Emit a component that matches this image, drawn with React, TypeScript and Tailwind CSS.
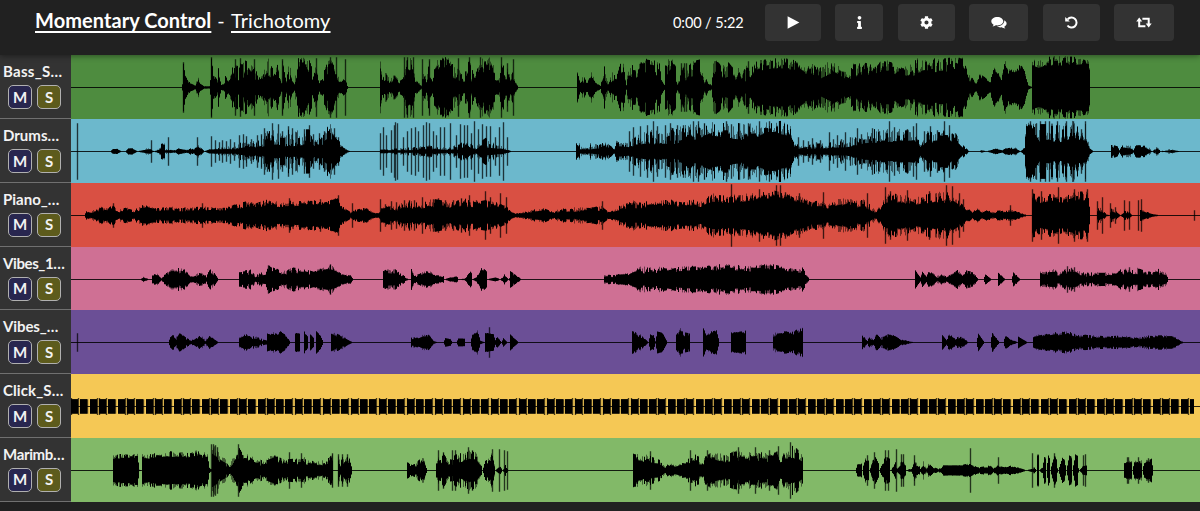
import React from "react";
import { FaInfo, FaCog } from "react-icons/fa";

const LEFT = 71;
const WIDTH = 1129;
const ROW = 63.75;
const MID = 32.2;

type Track = {
  name: string;
  bg: string;
  tracking: string;
  spread: number;
  // share of the body height that always stays filled
  core: number;
  // "x:body:peak" control points, half-heights in px
  env: string;
  // "x:height" translucent transients
  hits?: string;
};

const clickEnv = (() => {
  const out: string[] = [];
  for (let i = 0; i < 121; i++) {
    const x = LEFT + i * 9.325;
    if (x > 1192) break;
    const a = Math.round(x);
    const b = Math.min(1194, Math.round(x + 7));
    out.push(`${a}:7.1:7.1`, `${b}:7.1:7.1`, `${b}:0:0`, `${Math.round(x + 9.325)}:0:0`);
  }
  return out.join(" ");
})();

const clickHits = (() => {
  const out: string[] = [];
  for (let i = 0; i < 121; i++) {
    const x = Math.round(LEFT + i * 9.325 + 7);
    if (x > 1188) break;
    out.push(`${x}:${i % 3 === 1 ? 7 : 8.3}`);
    if (i % 3 === 0) out.push(`${x - 7}:8.3`);
  }
  return out.join(" ");
})();

const tracks: Track[] = [
  {
    name: "Bass_S…",
    bg: "bg-[#4e8c3f]",
    tracking: "tracking-[0.3px]",
    spread: 1.1,
    core: 0.84,
    env: "182:3:3 183:22:25 185:8:12 190:3:4 195:2:2 197:6:14 199:4:5 204:1:1 209:1:1 210:4:8 211:24:30 213:10:14 217:5:8 218:8:20 221:2:3 224:3:5 225:6:16 228:5:8 231:6:18 234:7:26 238:7:29 243:7:28 247:6:26 250:6:20 254:6:28 258:6:8 263:6:22 267:14:30 272:10:28 277:5:24 280:4:10 282:5:28 285:5:10 289:5:26 292:4:8 294:2:4 296:10:20 298:24:30 304:27:30 309:8:28 313:6:16 316:6:28 319:4:6 322:4:10 325:10:26 330:8:30 336:8:30 338:6:12 341:4:6 344:3:10 348:0:0 379:0:0 380:10:26 382:5:8 386:6:20 389:4:6 394:5:18 399:4:6 403:5:10 405:14:30 409:8:30 413:10:28 415:5:8 421:1:2 422:6:28 426:4:6 429:7:28 432:5:8 435:12:28 440:24:30 449:22:30 453:8:22 458:7:20 463:6:10 469:7:30 474:6:10 480:9:28 485:18:30 492:22:30 495:6:8 499:5:9 501:12:30 504:5:24 507:5:24 510:5:10 513:5:20 515:4:6 518:0:0 576:0:0 577:7:16 580:3:6 584:5:14 587:3:5 591:4:16 595:4:5 600:1:2 603:8:22 605:5:20 608:1:4 612:4:16 616:5:12 620:14:24 623:7:28 626:1:3 628:7:24 634:8:24 639:14:28 645:16:29 652:15:28 659:13:26 661:5:8 664:2:3 665:12:26 671:20:30 675:8:24 677:2:4 681:6:22 687:6:22 692:12:26 699:8:28 703:5:12 708:2:5 711:1:2 713:12:30 716:20:29 722:10:26 727:12:29 731:7:22 735:6:18 741:8:24 745:7:24 750:6:18 754:14:26 762:18:28 770:20:29 778:22:30 788:20:29 800:17:26 805:13:22 812:12:24 818:8:20 826:13:25 835:17:24 842:12:18 848:8:16 853:12:24 862:13:25 870:14:24 876:12:22 882:17:29 893:16:24 902:14:20 908:12:22 914:14:30 922:16:28 932:17:30 943:18:29 954:20:30 962:22:30 966:16:20 969:6:12 972:8:12 976:3:4 979:12:14 984:7:11 990:4:5 993:17:21 998:11:14 1001:7:9 1004:24:29 1009:14:19 1015:17:20 1020:19:25 1025:13:16 1028:2:3 1032:0:0 1032:25:27 1038:22:29 1044:24:31 1062:25:31 1080:27:31 1088:27:28 1089:20:20 1090:0:0",
    hits: "183:25 211:30 235:28 240:29 254:28 282:28 316:29 330:30 336:30 345:28 404:30 407:30 413:30 422:28 429:28 458:29 469:30 480:30 501:30 507:24 513:28 681:24 684:24 686:24 748:26 784:26",
  },
  {
    name: "Drums…",
    bg: "bg-[#6cb8cc]",
    tracking: "tracking-[0px]",
    spread: 2.2,
    core: 0.9,
    env: "110:0:0 112:2:2 116:2.5:3 121:0:0 125:0:0 128:3:3 133:2:3 137:0:0 142:1:1 148:2:4 154:0:0 157:1:2 160:2:4 161:8:9 164:7:8 165:1:2 169:1:3 175:1:1 178:3:3 185:1:3 190:1:3 194:2:3 198:4:6 204:0:0 209:2:2 225:2:5 235:2:6 246:4:12 256:4:10 265:5:20 275:6:24 282:5:24 292:5:20 302:6:22 312:6:22 320:5:12 325:8:20 329:24:30 332:7:22 338:6:12 343:2:4 350:0:0 379:0:0 380:1:2 395:1:3 410:1:4 430:2:6 450:1:4 460:2:10 467:5:13 475:2:6 485:4:14 495:3:9 503:2:4 511:0:0 576:0:0 576:8:8 580:2:8 585:2:4 590:2:9 597:3:7 602:3:9 608:4:8 614:2:3 616:5:11 622:5:10 628:4:8 634:6:18 644:8:20 652:7:22 662:8:24 675:8:24 684:11:28 696:13:30 708:18:30 719:16:28 731:13:30 743:12:28 755:14:28 764:20:30 776:20:30 788:17:31 794:4:16 800:2:6 815:3:8 825:3:9 835:4:10 845:4:12 855:6:15 865:9:18 878:9:24 890:10:24 904:9:22 914:10:22 920:3:7 926:9:20 938:10:22 948:11:20 956:11:17 962:4:7 969:0:0 979:0:0 981:1:1 986:0:0 990:1:1 995:2.5:3 1002:1:1 1005:3:3 1015:2:4 1020:0:0 1024:3:4 1026:28:31 1032:25:31 1038:11:28 1048:11:28 1060:10:28 1073:14:31 1086:11:28 1089:3:5 1093:0:0 1110:0:0 1111:4:7 1117:3:5 1119:1:1 1122:4:6 1130:3:6 1133:1:1 1135:5:6 1145:4:6 1149:1:4 1152:0:0 1157:1:6 1160:0:0 1163:0:1 1170:1:3 1180:0:0",
    hits: "77:28 151:11 168:14 197:14 211:15 215:11 219:9 222:11 226:10 230:12 234:9 239:16 243:17 246:15 251:12 257:16 261:17 264:23 267:20 272:28 278:27 282:20 288:25 292:23 296:19 304:22 309:26 313:17 319:18 324:20 334:23 338:14 380:18 383:24 386:16 391:21 394:26 395:29 397:28 403:14 407:20 411:23 415:24 418:20 423:26 426:29 429:28 433:20 436:16 440:24 444:24 450:28 456:16 460:27 464:26 467:26 471:18 474:30 478:22 482:27 486:25 490:25 495:14 499:24 503:29 507:14 629:20 633:24 640:25 647:26 653:30 657:25 665:26 670:28 677:26 683:26 689:24 693:30 698:30 704:28 726:30 731:27 739:28 748:28 759:30 769:30 779:30 798:14 803:11 808:10 812:13 816:9 820:11 829:19 833:12 837:16 841:12 845:19 850:14 857:23 861:17 868:15 872:23 879:20 889:30 894:24 897:19 907:22 913:25 916:28 924:20 930:25 937:21 944:30 949:26 955:18 1030:30 1036:28 1040:30 1045:30 1049:30 1057:30 1066:30 1073:30 1081:22 1085:30",
  },
  {
    name: "Piano_…",
    bg: "bg-[#d95043]",
    tracking: "tracking-[0px]",
    spread: 1.3,
    core: 0.9,
    env: "84:0:0 86:3:4 90:2:4 95:3:6 101:5:9 108:4:8 113:6:12 119:3:6 127:5:8 133:3:6 137:4:8 142:7:13 148:6:9 156:4:7 165:5:9 180:4:8 197:5:9 205:5:9 213:5:8 225:5:8 233:6:11 245:8:14 254:7:12 265:10:16 275:8:14 288:10:15 300:10:15 312:10:15 325:11:15 337:13:18 342:7:9 350:2:4 355:4:6 361:4:7 366:6:8 371:3:4 378:1:2 381:5:8 390:6:10 396:5:8 403:7:15 420:7:14 435:9:17 450:8:14 465:9:17 475:8:14 485:8:16 495:10:14 505:6:10 511:3:4 516:1:2 525:2:4 535:4:6 543:5:8 552:2:4 565:4:8 575:3:8 583:5:8 593:4:8 601:5:10 608:2:4 617:5:9 633:8:15 643:7:14 656:10:15 670:11:16 682:8:13 692:11:16 700:9:13 712:14:22 727:13:20 740:14:22 755:16:22 773:18:25 785:17:23 800:14:19 813:9:14 821:9:15 827:6:12 837:9:16 847:12:19 855:8:14 861:10:18 869:6:14 874:3:7 880:4:8 885:12:21 900:14:23 913:11:18 926:13:21 940:14:25 953:13:21 961:8:14 967:4:8 972:2:3 977:4:8 982:2:4 986:5:5 992:2:4 999:3:5 1005:3:4 1010:4:8 1015:3:5 1022:1:2 1027:0:0 1032:0:0 1032:14:22 1040:13:20 1050:16:22 1062:13:18 1074:16:23 1087:16:26 1090:0:0 1096:0:0 1097:4:7 1101:4:8 1105:1:2 1109:0:0 1111:4:7 1115:2:5 1120:0:0 1124:2:5 1129:2:4 1132:0:0 1139:0:0 1140:4:6 1145:3:4 1153:1:1 1160:0:0",
    hits: "113:12 202:12 232:10 251:13 289:17 320:16 335:17 338:20 352:12 380:16 385:11 391:14 396:13 404:15 409:15 414:15 422:18 433:16 438:17 445:15 453:15 461:17 469:20 476:15 485:24 490:18 500:22 506:18 602:14 731:31 739:20 759:26 776:30 780:30 785:23 799:22 823:23 867:22 885:28 890:24 907:25 929:24 946:30 952:29 959:22 963:16 1010:10 1032:26 1041:24 1058:28 1074:26 1087:26 1097:14 1102:18 1110:12 1115:8 1124:15 1129:14 1138:15 1141:16 1194:5",
  },
  {
    name: "Vibes_1…",
    bg: "bg-[#cf7094]",
    tracking: "tracking-[-0.4px]",
    spread: 1,
    core: 0.85,
    env: "140:0:0 143:2:3 148:0:0 151:0:0 152:4:5 158:3:6 161:1:1 165:4:6 171:6:10 179:6:12 186:6:9 190:2:3 193:2:3 196:2:5 199:5:8 205:3:4 206:1:2 208:7:8 211:6:11 218:0:0 239:0:0 239:7:7 244:5:9 250:4:10 255:2:4 261:3:7 266:4:8 268:9:14 275:7:11 285:4:9 293:8:12 300:6:10 307:5:10 313:4:8 316:8:9 322:9:13 330:10:15 334:9:12 341:4:6 350:3:4 353:0:0 383:0:0 383:7:10 388:5:10 395:4:10 401:3:6 408:0:0 411:0:0 411:10:11 414:2:4 419:3:6 424:6:10 430:5:8 435:3:4 443:2:4 444:0:0 450:2:2 457:2:3 458:0:0 464:0:1 467:3:5 471:4:9 472:0:0 476:1:2 478:5:7 481:10:12 486:9:11 487:0:0 495:2:2 500:0:0 502:1:2 504:4:5 508:0:0 509:1:1 510:6:8 516:3:4 521:0:0 604:0:0 604:3:5 615:2:5 625:3:6 632:6:8 640:7:13 653:6:12 656:5:8 658:8:13 668:8:11 683:9:13 700:10:14 713:9:14 725:11:16 740:10:14 755:8:14 770:11:16 785:8:12 798:7:10 802:6:12 809:0:0 914:0:0 915:8:9 920:1:2 922:6:8 926:1:3 929:7:10 936:1:3 941:3:6 946:1:3 951:4:5 957:8:10 962:3:4 966:6:9 972:5:8 978:0:0 983:0:0 985:5:5 991:0:0 997:0:0 998:6:7 1005:0:0 1011:0:0 1013:6:8 1020:0:0 1039:0:0 1040:6:10 1046:5:10 1055:5:11 1058:4:6 1064:6:12 1076:6:12 1080:3:7 1100:3:7 1116:3:7 1120:5:10 1135:5:12 1150:5:9 1161:5:11 1166:4:6 1168:0:0",
    hits: "268:14 330:15 1067:13 1071:11 1074:12 1129:12",
  },
  {
    name: "Vibes_…",
    bg: "bg-[#6b4f96]",
    tracking: "tracking-[-0.1px]",
    spread: 1,
    core: 0.88,
    env: "168:0:0 170:5:6 172:7:8 176:2:6 179:9:10 185:3:6 191:0:2 195:3:4 199:4:8 205:1:3 207:3:4 209:6:7 214:3:3 218:0:0 239:0:0 239:4:5 245:7:9 250:3:6 256:3:6 262:1:3 266:1:2 267:8:9 272:7:10 280:8:11 285:6:8 290:0:0 295:0:0 295:9:10 299:7:9 300:0:0 303:0:0 304:10:11 307:5:6 308:0:0 309:0:0 310:8:9 313:4:5 314:0:0 316:0:0 316:10:11 320:7:7 323:0:0 331:0:0 331:9:10 337:5:9 345:3:5 352:0:0 411:0:0 411:3:5 418:4:5 423:6:8 429:6:8 432:1:3 437:0:0 443:0:0 445:4:5 450:3:4 452:0:0 456:0:0 458:4:4 464:4:4 465:0:0 470:0:0 472:7:9 477:9:12 480:1:2 484:0:0 485:10:10 493:8:8 495:2:4 497:5:5 501:0:1 503:4:4 507:0:0 509:0:1 510:8:8 518:0:0 632:0:0 632:11:12 637:6:9 640:5:9 644:3:4 648:0:0 650:8:8 653:5:8 655:1:1 657:11:11 662:8:10 667:0:0 675:0:0 676:7:8 680:10:14 684:6:10 689:8:9 690:0:0 703:0:0 703:14:14 706:7:8 711:7:11 716:12:12 719:0:0 730:0:0 731:10:10 738:8:11 745:10:12 746:0:0 772:0:0 773:5:9 778:6:11 787:10:11 793:8:11 799:7:15 802:15:15 803:0:0 861:0:0 862:6:7 867:1:2 869:4:6 873:1:3 876:7:9 880:2:5 884:4:6 888:6:9 896:5:6 901:2:3 914:0:0 941:0:0 942:7:8 946:2:3 949:6:9 955:2:4 958:4:6 963:3:5 968:0:0 976:0:0 978:9:10 984:0:0 990:0:0 992:9:10 999:0:0 1003:0:0 1005:6:7 1012:1:2 1018:0:0 1018:6:6 1027:0:0 1032:0:0 1033:5:6 1038:6:8 1050:6:9 1060:8:11 1070:8:11 1077:5:7 1085:4:8 1095:4:7 1110:4:6 1120:5:7 1137:3:5 1145:4:7 1160:5:7 1172:5:7 1183:0:0",
    hits: "77:9 489:15",
  },
  { name: "Click_S…", bg: "bg-[#f5c855]", tracking: "tracking-[0.1px]", spread: 1, core: 1, env: clickEnv, hits: clickHits },
  {
    name: "Marimb…",
    bg: "bg-[#82b968]",
    tracking: "tracking-[-0.35px]",
    spread: 1.4,
    core: 0.95,
    env: "113:0:0 113:12:15 120:12:17 130:12:16 137:12:17 139:0:1 141:0:0 142:12:16 150:12:17 160:13:17 170:14:20 185:13:18 197:14:20 207:12:17 209:1:3 211:1:2 212:16:26 217:12:22 220:7:15 224:4:13 229:2:4 233:6:14 238:9:24 242:8:17 250:7:16 256:4:10 265:6:12 273:8:16 285:6:11 295:6:12 303:6:14 312:5:10 325:5:10 332:8:17 333:0:0 338:0:0 338:10:14 340:3:10 344:8:16 350:7:13 352:0:0 407:0:0 407:6:8 412:3:6 417:4:10 423:8:14 427:0:0 435:0:0 436:5:12 443:6:18 448:5:10 455:5:16 463:8:18 469:12:20 476:9:18 480:5:9 482:0:0 485:4:10 488:8:12 492:10:19 495:0:0 498:2:3 500:3:8 502:0:0 505:2:6 508:0:0 632:0:0 633:12:17 642:9:16 650:7:15 659:6:11 665:1:3 668:4:8 673:4:6 676:3:6 682:5:9 687:4:8 690:9:19 699:6:14 703:5:8 705:12:17 715:11:20 724:8:17 735:8:20 745:9:18 757:10:20 768:8:17 777:9:21 780:5:9 783:12:20 791:12:26 799:9:20 802:8:14 803:0:0 855:0:0 857:5:6 861:6:7 862:0:0 864:8:10 865:10:12 868:9:11 869:0:0 872:4:10 875:12:14 878:6:8 879:0:0 882:4:7 885:10:15 889:8:13 890:0:0 893:0:4 895:3:9 897:1:4 900:3:10 904:5:12 906:0:0 911:1:2 914:5:12 917:3:7 920:1:3 923:4:9 926:1:3 929:4:8 933:2:3 937:0:2 941:2:3 943:5:5 960:5:5 969:5:7 979:2:3 983:2:4 990:3:6 993:1:2 997:4:5 1004:2:3 1010:3:5 1020:2:2 1026:0:0 1032:1:2 1034:2:4 1036:0:0 1037:15:16 1039:15:16 1039:0:0 1042:2:3 1044:12:14 1046:8:12 1046:0:0 1048:13:15 1050:12:14 1050:0:0 1054:14:16 1056:10:12 1057:2:2 1058:0:0 1062:13:13 1064:10:11 1066:0:0 1069:14:15 1071:12:14 1072:0:0 1075:15:16 1077:14:15 1078:2:2 1079:0:0 1083:4:6 1086:4:8 1087:0:0 1123:0:0 1124:7:9 1131:8:11 1132:0:0 1134:8:10 1141:7:10 1142:0:0 1144:7:10 1151:9:12 1153:0:0",
    hits: "211:26 213:26 215:25 217:23 238:26 289:18 301:17 332:17 338:16 342:16 347:16 438:20 443:18 452:20 455:20 468:23 472:20 492:21 499:21 504:20 507:19 650:19 690:20 707:20 738:23 755:23 769:20 778:24 790:28 796:22 867:15 874:18 885:20 888:20 896:21 901:16 903:16 914:15 970:22 998:13 1032:17 1054:17 1083:15 1085:16 1127:13 1128:13 1138:13 1148:12",
  },
];

const rand = (seed: number) => {
  let s = seed >>> 0;
  return () => {
    s = (s + 0x6d2b79f5) >>> 0;
    let t = Math.imul(s ^ (s >>> 15), 1 | s);
    t = (t + Math.imul(t ^ (t >>> 7), 61 | t)) ^ t;
    return ((t ^ (t >>> 14)) >>> 0) / 4294967296;
  };
};

const column = (x: number, h: number) =>
  `M${x - LEFT + 0.5} ${(MID - h).toFixed(1)}v${(2 * h + 0.5).toFixed(1)}`;

function buildPaths(track: Track, seed: number) {
  const next = rand(seed);
  const pts = track.env.split(" ").map((p) => p.split(":").map(Number));
  let solid = "";
  let soft = "";
  let grain = next();
  for (let i = 0; i < pts.length - 1; i++) {
    const [x0, b0, p0] = pts[i];
    const [x1, b1, p1] = pts[i + 1];
    for (let x = x0; x < x1; x++) {
      const t = (x - x0) / (x1 - x0);
      const body = (b0 + (b1 - b0) * t) * track.core;
      const peak = p0 + (p1 - p0) * t;
      if (next() > 0.35) grain = next();
      if (peak < 0.4) continue;
      const h = body + (peak - body) * Math.pow(grain, track.spread);
      solid += column(x, h);
      if (peak - h > 1) soft += column(x, h + (peak - h) * Math.pow(next(), 2));
    }
  }
  const hits = (track.hits ?? "")
    .split(" ")
    .filter(Boolean)
    .map((p) => p.split(":").map(Number))
    .map(([x, h]) => column(x, h))
    .join("");
  return { solid, soft, hits };
}

function Waveform({ track, seed }: { track: Track; seed: number }) {
  const { solid, soft, hits } = buildPaths(track, seed);
  return (
    <svg className="block h-full w-full" viewBox={`0 0 ${WIDTH} ${ROW}`} preserveAspectRatio="none" fill="none" stroke="#000">
      <path d={`M0 ${MID + 0.3}H${WIDTH}`} strokeOpacity=".85" />
      <path d={soft} strokeOpacity=".5" />
      <path d={hits} strokeOpacity=".72" strokeWidth="1.35" />
      <path d={solid} />
    </svg>
  );
}

type IconProps = { className?: string };

const PlayIcon = ({ className }: IconProps) => (
  <svg className={className} viewBox="0 0 13 13" fill="currentColor">
    <path d="M.6.3v12.4L12.4 6.5z" />
  </svg>
);

const ChatIcon = ({ className }: IconProps) => (
  <svg className={className} viewBox="0 0 16 14" fill="currentColor">
    <path d="M6.3 1C2.9 1 .3 2.9.3 5.3c0 1.4.9 2.6 2.3 3.4-.2.8-.6 1.3-1.1 1.8 1.3-.1 2.5-.5 3.4-1.2.5.1.9.1 1.4.1 3.4 0 6-1.800 6-4.100S9.700 1 6.300 1z" />
    <path d="M13.300 4.200c.2 3.300-2.900 5.900-7.200 6.100 1.100.9 2.800 1.300 4.600 1 1 .7 2.200 1.200 3.700 1.200-.6-.5-.9-1.100-1.100-1.800 1.400-.8 2.300-1.900 2.300-3.200 0-1.300-.9-2.500-2.300-3.300z" />
  </svg>
);

const UndoIcon = ({ className }: IconProps) => (
  <svg className={className} viewBox="0 0 13 13" fill="none">
    <path d="M2.700 3.400a5 5 0 1 1-.2 6.100" stroke="currentColor" strokeWidth="2" />
    <path d="M.2.900v4.500h4.600z" fill="currentColor" />
  </svg>
);

const LoopIcon = ({ className }: IconProps) => (
  <svg className={className} viewBox="0 0 16 11" fill="none">
    <path d="M3.200 4v5.200h6.200M6.400 1.800h6.300V7" stroke="currentColor" strokeWidth="2" />
    <path d="M3.200.5L.2 4.600h6zM12.700 10.500l-3-4.100h6z" fill="currentColor" />
  </svg>
);

const actions = [
  { label: "Play", Icon: PlayIcon, width: "w-14", size: "size-[13px]" },
  { label: "Info", Icon: FaInfo, width: "w-12", size: "size-[13px]" },
  { label: "Settings", Icon: FaCog, width: "w-[57px]", size: "size-[13px]" },
  { label: "Comments", Icon: ChatIcon, width: "w-[59px]", size: "h-[14px] w-4" },
  { label: "Restart", Icon: UndoIcon, width: "w-[57px]", size: "size-[13px]" },
  { label: "Loop", Icon: LoopIcon, width: "w-[60px]", size: "h-[11px] w-4" },
];

const square =
  "flex size-6 items-center justify-center rounded-[5px] border-[1.5px] border-[#b0b0b0] text-[15px] font-bold leading-none text-[#f2f2f2]";

export default function App() {
  return (
    <div className="flex h-[511px] w-[1200px] flex-col overflow-hidden bg-[#212121] font-['Lato',sans-serif] text-white">
      <header className="z-10 flex h-[55.4px] shrink-0 items-start justify-between bg-[#212121] pr-[26px] pl-[35px] shadow-[0_1px_6px_rgba(0,0,0,0.45)]">
        <h1 className="flex pt-1.5 text-[20px] leading-7 whitespace-nowrap decoration-[1.5px] underline-offset-[3px]">
          <a className="w-44 font-bold tracking-[0.06px] underline">Momentary Control</a>
          <span className="w-5 text-center">-</span>
          <a className="w-[99px] tracking-[0.1px] underline">Trichotomy</a>
        </h1>
        <div className="flex items-center pt-1">
          <span className="mr-[22px] w-[70px] text-[14.5px] tracking-[-0.1px] whitespace-nowrap">0:00 / 5:22</span>
          <div className="flex gap-[14.4px]">
            {actions.map(({ label, Icon, width, size }) => (
              <button key={label} aria-label={label} className={`flex h-[37px] items-center justify-center rounded bg-[#333] ${width}`}>
                <Icon className={size} />
              </button>
            ))}
          </div>
        </div>
      </header>
      <main className="flex flex-col">
        {tracks.map((track, i) => (
          <section key={i} className="flex h-[63.75px]">
            <div className="flex w-[71px] shrink-0 flex-col border-b border-[#707070] bg-[#333]">
              <span className={`h-[30px] pt-[6px] pl-[3px] text-[15px] leading-5 font-bold whitespace-nowrap text-[#f2f2f2] ${track.tracking}`}>
                {track.name}
              </span>
              <div className="flex gap-[5px] pl-2">
                <button className={`${square} bg-[#28264f]`}>M</button>
                <button className={`${square} bg-[#5d5b1c]`}>S</button>
              </div>
            </div>
            <div className={`min-w-0 flex-1 ${track.bg}`}>
              <Waveform track={track} seed={i * 977 + 31} />
            </div>
          </section>
        ))}
      </main>
    </div>
  );
}
